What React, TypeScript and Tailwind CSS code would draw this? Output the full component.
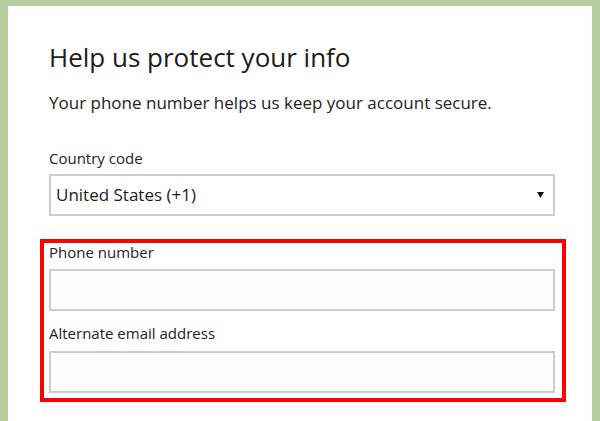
import React from 'react';

const font = { fontFamily: '"Open Sans", "Noto Sans", sans-serif' };

function Field({ label, className = '', gap }: { label: string; className?: string; gap: string }) {
    return (
        <div className={className}>
            <div className="text-[15px] leading-[18px] text-[#222]">{label}</div>
            <div className={`${gap} h-[42px] border-2 border-[#cdcdcd] bg-[#fdfdfd]`} />
        </div>
    );
}

export default function App() {
    return (
        <main className="h-[421px] w-[600px] overflow-hidden bg-[#b6cfa1] pl-[8px] pr-[8px] pt-[6px]" style={font}>
            <div className="h-full bg-white pl-[32px] pr-[18px] pt-[34px]">
                <div className="pl-[9px]">
                    <h1 className="text-[26px] font-normal leading-[34px] text-[#1b1b1b]">Help us protect your info</h1>
                    <p className="mt-[18px] text-[17px] leading-[22px] text-[#222]">Your phone number helps us keep your account secure.</p>
                    <div className="mt-[34px] text-[15px] leading-[20px] text-[#222]">Country code</div>
                    <div className="mt-[6px] flex h-[42px] w-[506px] items-center justify-between border-2 border-[#cdcdcd] bg-white pl-[5px] pr-[9px]">
                        <span className="text-[17px] text-[#1b1b1b]">United States (+1)</span>
                        <svg width="7" height="6" viewBox="0 0 7 6">
                            <path d="M0 0 H7 L3.5 6 Z" fill="#111" />
                        </svg>
                    </div>
                </div>
                <div className="mt-[23px] w-[526px] border-[4px] border-[#ff0000] pb-[5px] pl-[5px] pr-[7px] pt-0">
                    <Field label="Phone number" gap="mt-[8px]" />
                    <Field label="Alternate email address" gap="mt-[9px]" className="mt-[13px]" />
                </div>
            </div>
        </main>
    );
}
